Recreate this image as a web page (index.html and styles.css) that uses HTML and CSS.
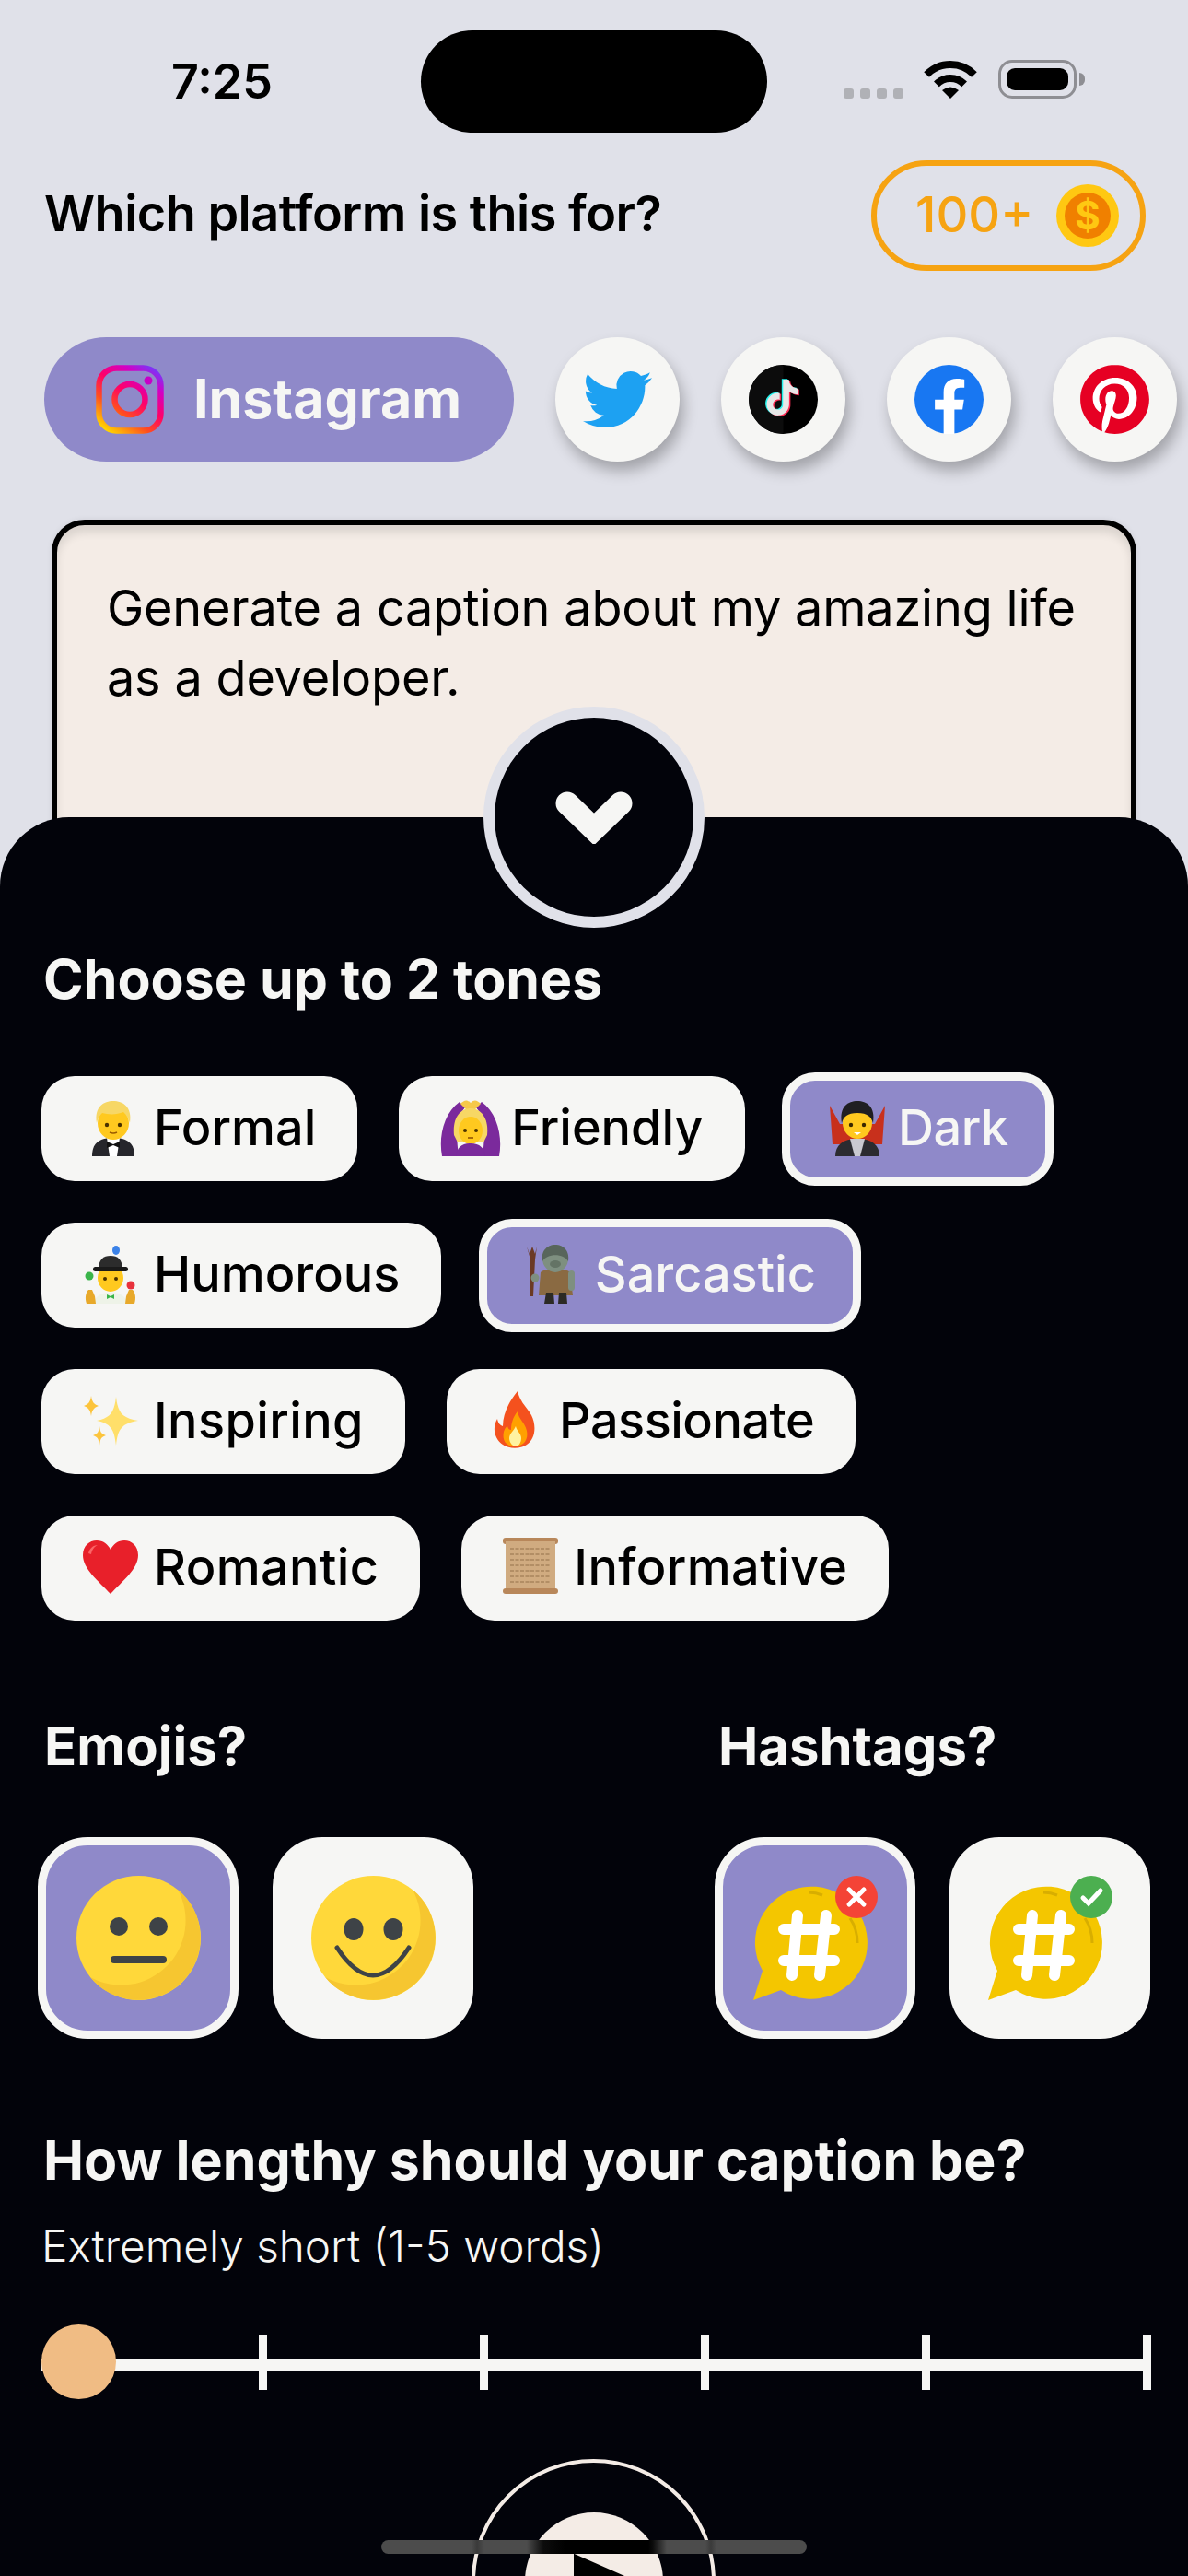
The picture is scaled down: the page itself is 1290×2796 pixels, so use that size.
FILE: index.html
```html
<!DOCTYPE html>
<html lang="en">
<head>
    <meta charset="UTF-8">
    <meta name="viewport" content="width=device-width, initial-scale=1.0">
    <title>Caption Generator</title>
    <link rel="stylesheet" href="styles.css">
</head>
<body>
    <svg class="defs" aria-hidden="true">
        <defs>
            <linearGradient id="ig-grad" gradientUnits="userSpaceOnUse" x1="12" y1="72" x2="62" y2="2">
                <stop offset="0" stop-color="#ffd600"/>
                <stop offset="0.3" stop-color="#ff4d1f"/>
                <stop offset="0.55" stop-color="#ff0069"/>
                <stop offset="0.8" stop-color="#d300c5"/>
                <stop offset="1" stop-color="#7638fa"/>
            </linearGradient>

            <symbol id="e-tux" viewBox="0 0 66 66">
                <path d="M10 63c0-13 6-20 23-20s23 7 23 20z" fill="#26262b"/>
                <path d="M26 43h14l-3 20h-8z" fill="#fff"/>
                <path d="M26 47l7 3 7-3v7l-7-3-7 3z" fill="#111"/>
                <ellipse cx="33" cy="27" rx="17" ry="18" fill="#ffc91f"/>
                <path d="M15 27C12 9 23 3 33 3s21 6 18 24c-2-7-5-10-7-12-7 3-16 3-23 1-3 3-5 6-6 11z" fill="#f7d765"/>
                <circle cx="26" cy="29" r="2.2" fill="#4a3200"/>
                <circle cx="40" cy="29" r="2.2" fill="#4a3200"/>
                <path d="M29 37q4 2 8 0" stroke="#9a5a00" stroke-width="1.5" fill="none"/>
            </symbol>
            <symbol id="e-woman" viewBox="0 0 66 66">
                <path d="M2 63C-2 42 4 16 21 4l6 6C17 22 17 38 20 63zM64 63C68 42 62 16 45 4l-6 6c10 12 10 28 7 53z" fill="#7b2a9c"/>
                <path d="M22 6c4-4 7-5 11-1 4-4 7-3 11 1l-6 6h-10z" fill="#f6c94a"/>
                <path d="M15 40C13 20 23 11 33 11s20 9 18 29l-4 8H19z" fill="#f7d765"/>
                <ellipse cx="33" cy="35" rx="13" ry="15" fill="#ffc91f"/>
                <path d="M17 63c1-9 6-14 16-14s15 5 16 14z" fill="#7b2a9c"/>
                <circle cx="27" cy="35" r="2" fill="#4a3200"/>
                <circle cx="39" cy="35" r="2" fill="#4a3200"/>
                <path d="M30 43h6" stroke="#8a4a00" stroke-width="1.5"/>
            </symbol>
            <symbol id="e-vampire" viewBox="0 0 66 66">
                <path d="M3 8l11 20h38L63 8l-3 42H6z" fill="#c8301c"/>
                <path d="M9 63c0-12 8-19 24-19s24 7 24 19z" fill="#2b2b30"/>
                <path d="M25 44h16l-5 19h-6z" fill="#c9c9d0"/>
                <ellipse cx="33" cy="27" rx="16" ry="17" fill="#ffc91f"/>
                <path d="M16 27C13 9 23 3 33 3s20 6 17 24c-2-7-6-11-17-11S18 20 16 27z" fill="#1f1f22"/>
                <circle cx="26" cy="29" r="2.2" fill="#3a2800"/>
                <circle cx="40" cy="29" r="2.2" fill="#3a2800"/>
                <path d="M29 37h8l-4 3z" fill="#fff"/>
            </symbol>
            <symbol id="e-juggler" viewBox="0 0 66 66">
                <ellipse cx="36" cy="6" rx="4" ry="5" fill="#3b82e8"/>
                <circle cx="7" cy="34" r="4.5" fill="#3ab54a"/>
                <circle cx="52" cy="44" r="4.5" fill="#e8323c"/>
                <path d="M12 64c1-8 7-12 18-12s17 4 18 12z" fill="#eef3e8"/>
                <path d="M26 54l4 2 4-2v5l-4-2-4 2z" fill="#3ab54a"/>
                <path d="M4 64c-2-6-1-12 2-15h4l3 7 1 8zM56 64c2-6 1-12-2-15h-4l-3 7-1 8z" fill="#e8a92a"/>
                <ellipse cx="30" cy="36" rx="14" ry="15" fill="#ffc91f"/>
                <circle cx="24" cy="37" r="2" fill="#4a3200"/>
                <circle cx="36" cy="37" r="2" fill="#4a3200"/>
                <path d="M17 27c0-11 5-15 13-15s13 4 13 15z" fill="#2c2c2c"/>
                <rect x="11" y="24" width="38" height="5" rx="2.5" fill="#1a1a1a"/>
            </symbol>
            <symbol id="e-troll" viewBox="0 0 66 66">
                <path d="M3 2l3 8 3-8 3 8 2-8-2 14-2 40H6l1-40z" fill="#6b3a24"/>
                <path d="M18 30c5-5 27-5 32 0l3 25H16z" fill="#8a6a42"/>
                <path d="M24 52h8l1 12h-11zM38 52h8l1 12H37z" fill="#2c2a24"/>
                <ellipse cx="34" cy="15" rx="14" ry="15" fill="#7e8f80"/>
                <path d="M20 18C18 5 27 0 34 0s16 5 14 18c-5-9-23-9-28 0z" fill="#58655b"/>
                <ellipse cx="34" cy="21" rx="6" ry="4" fill="#647365"/>
                <rect x="48" y="28" width="7" height="22" rx="3.5" fill="#7e8f80"/>
                <circle cx="12" cy="36" r="4.5" fill="#7e8f80"/>
            </symbol>
            <symbol id="e-sparkles" viewBox="0 0 66 66">
                <path d="M36 6c2 17 6 23 24 26-18 3-22 9-24 27-2-18-6-24-21-27 15-3 19-9 21-26z" fill="#ffdf6a"/>
                <path d="M9 5c1 7 3 9 8 11-5 2-7 4-8 11-1-7-3-9-8-11 5-2 7-4 8-11z" fill="#fcc43c"/>
                <path d="M18 38c1 7 2 8 7 10-5 2-6 3-7 11-1-8-2-9-7-11 5-2 6-3 7-10z" fill="#fcc43c"/>
            </symbol>
            <symbol id="e-fire" viewBox="0 0 66 66">
                <path d="M32 0c3 12 9 16 15 26 6 12 4 26-5 32-7 5-19 5-26 0C7 52 4 40 10 30c1 5 3 7 6 8C16 24 23 11 32 0z" fill="#f4511e"/>
                <path d="M32 22c1 8 8 12 10 21 2 9-3 17-13 17S15 53 17 44c1-3 2-5 4-6 1 3 2 4 4 4 0-7 2-14 7-20z" fill="#ffa000"/>
                <path d="M30 38c1 5 6 8 6 13 0 5-3 9-6 9s-7-4-7-9c0-5 5-8 7-13z" fill="#fff3a0"/>
            </symbol>
            <symbol id="e-heart" viewBox="0 0 66 66">
                <path d="M30 61C17 47 0 34 0 19 0 9 7 3 15 3c7 0 12 4 15 10 3-6 8-10 15-10 8 0 15 6 15 16 0 15-17 28-30 42z" fill="#e8202a"/>
                <path d="M6 17c1-5 5-9 10-9-4 2-6 5-7 10z" fill="#f77" opacity="0.8"/>
            </symbol>
            <symbol id="e-scroll" viewBox="0 0 66 66">
                <rect x="0" y="0" width="60" height="7" rx="3" fill="#b8875a"/>
                <rect x="3" y="4" width="54" height="54" fill="#d0ab80"/>
                <path d="M8 12h44M8 18h44M8 24h44M8 30h44M8 36h44M8 42h44M8 48h44" stroke="#a8855c" stroke-width="1.6" stroke-dasharray="4 1.5"/>
                <rect x="0" y="55" width="60" height="6" rx="3" fill="#b8875a"/>
            </symbol>
            <symbol id="hash" viewBox="0 0 135 135">
                <path d="M0 135l10-32A61 61 0 1 1 30 124z" fill="#f4c600"/>
                <path d="M60 18q8 0 15 3M105 46q8 12 8 27" stroke="#d8ae00" stroke-width="3" fill="none"/>
                <path d="M33 58h55M33 92h55M48 43l-6 65M79 43l-7 65" stroke="#fff" stroke-width="12" stroke-linecap="round" fill="none"/>
            </symbol>
        </defs>
    </svg>

    <div class="status-bar">
        <div class="time">7:25</div>
        <div class="island"></div>
        <div class="status-icons">
            <div class="signal"><span></span><span></span><span></span><span></span></div>
            <svg class="wifi" width="58" height="42" viewBox="0 0 58 42">
                <path d="M3.1 16A36 36 0 0 1 54.9 16M13.9 26.4A21 21 0 0 1 44.1 26.4" stroke="#000" stroke-width="8" fill="none"/>
                <path d="M29 42L20 33Q29 26 38 33Z"/>
            </svg>
            <div class="battery"><div class="battery-level"></div></div>
            <div class="battery-cap"></div>
        </div>
    </div>

    <div class="top-row">
        <h1 class="page-title">Which platform is this for?</h1>
        <div class="coins">
            <span>100+</span>
            <svg width="68" height="68" viewBox="0 0 68 68">
                <circle cx="34" cy="34" r="34" fill="#ffc812"/>
                <circle cx="34" cy="34" r="25" fill="#f08000"/>
                <text x="34" y="49" text-anchor="middle" class="coin-sign">$</text>
            </svg>
        </div>
    </div>

    <div class="platforms">
        <div class="platform-pill">
            <svg width="74" height="75" viewBox="0 0 74 75">
                <rect x="3.5" y="3.5" width="67" height="68" rx="19" fill="none" stroke="url(#ig-grad)" stroke-width="6.5"/>
                <circle cx="37" cy="37.5" r="16.5" fill="none" stroke="url(#ig-grad)" stroke-width="6.5"/>
                <circle cx="57" cy="17" r="4.5" fill="#c800c8"/>
            </svg>
            <span>Instagram</span>
        </div>
        <div class="platform-btn">
            <svg width="75" height="75" viewBox="0 0 24 24">
                <path fill="#1da1f2" d="M23.953 4.57a10 10 0 01-2.825.775 4.958 4.958 0 002.163-2.723c-.951.555-2.005.959-3.127 1.184a4.92 4.92 0 00-8.384 4.482C7.69 8.095 4.067 6.13 1.64 3.162a4.822 4.822 0 00-.666 2.475c0 1.71.87 3.213 2.188 4.096a4.904 4.904 0 01-2.228-.616v.06a4.923 4.923 0 003.946 4.827 4.996 4.996 0 01-2.212.085 4.936 4.936 0 004.604 3.417 9.867 9.867 0 01-6.102 2.105c-.39 0-.779-.023-1.17-.067a13.995 13.995 0 007.557 2.209c9.053 0 13.998-7.496 13.998-13.985 0-.21 0-.42-.015-.63A9.935 9.935 0 0024 4.59z"/>
            </svg>
        </div>
        <div class="platform-btn">
            <svg width="75" height="75" viewBox="0 0 75 75">
                <circle cx="37.5" cy="37.5" r="37.5" fill="#000"/>
                <path d="M37.5 0a37.5 37.5 0 0 0 0 75z" fill="#0c0c0c"/>
                <g transform="translate(17 16) scale(1.62)">
                    <path fill="#25f4ee" transform="translate(-0.9 -0.5)" d="M12.525.02c1.31-.02 2.61-.01 3.91-.02.08 1.53.63 3.09 1.75 4.17 1.12 1.11 2.7 1.62 4.24 1.79v4.03c-1.44-.05-2.89-.35-4.2-.97-.57-.26-1.1-.59-1.62-.93-.01 2.92.01 5.84-.02 8.75-.08 1.4-.54 2.79-1.35 3.94-1.31 1.92-3.58 3.17-5.91 3.21-1.43.08-2.86-.31-4.08-1.03-2.02-1.19-3.44-3.37-3.65-5.71-.02-.5-.03-1-.01-1.49.18-1.9 1.12-3.72 2.58-4.96 1.66-1.44 3.98-2.13 6.15-1.72.02 1.48-.04 2.96-.04 4.44-.99-.32-2.15-.23-3.02.37-.63.41-1.11 1.04-1.36 1.75-.21.51-.15 1.07-.14 1.61.24 1.64 1.82 3.02 3.5 2.87 1.12-.01 2.19-.66 2.77-1.61.19-.33.4-.67.41-1.06.1-1.79.06-3.57.07-5.36.01-4.03-.01-8.05.02-12.07z"/>
                    <path fill="#fe2c55" transform="translate(0.9 0.6)" d="M12.525.02c1.31-.02 2.61-.01 3.91-.02.08 1.53.63 3.09 1.75 4.17 1.12 1.11 2.7 1.62 4.24 1.79v4.03c-1.44-.05-2.89-.35-4.2-.97-.57-.26-1.1-.59-1.62-.93-.01 2.92.01 5.84-.02 8.75-.08 1.4-.54 2.79-1.35 3.94-1.31 1.92-3.58 3.17-5.91 3.21-1.43.08-2.86-.31-4.08-1.03-2.02-1.19-3.44-3.37-3.65-5.71-.02-.5-.03-1-.01-1.49.18-1.9 1.12-3.72 2.58-4.96 1.66-1.44 3.98-2.13 6.15-1.72.02 1.48-.04 2.96-.04 4.44-.99-.32-2.15-.23-3.02.37-.63.41-1.11 1.04-1.36 1.75-.21.51-.15 1.07-.14 1.61.24 1.64 1.82 3.02 3.5 2.87 1.12-.01 2.19-.66 2.77-1.61.19-.33.4-.67.41-1.06.1-1.79.06-3.57.07-5.36.01-4.03-.01-8.05.02-12.07z"/>
                    <path fill="#e8e8e8" d="M12.525.02c1.31-.02 2.61-.01 3.91-.02.08 1.53.63 3.09 1.75 4.17 1.12 1.11 2.7 1.62 4.24 1.79v4.03c-1.44-.05-2.89-.35-4.2-.97-.57-.26-1.1-.59-1.62-.93-.01 2.92.01 5.84-.02 8.75-.08 1.4-.54 2.79-1.35 3.94-1.31 1.92-3.58 3.17-5.91 3.21-1.43.08-2.86-.31-4.08-1.03-2.02-1.19-3.44-3.37-3.65-5.71-.02-.5-.03-1-.01-1.49.18-1.9 1.12-3.72 2.58-4.96 1.66-1.44 3.98-2.13 6.15-1.72.02 1.48-.04 2.96-.04 4.44-.99-.32-2.15-.23-3.02.37-.63.41-1.11 1.04-1.36 1.75-.21.51-.15 1.07-.14 1.61.24 1.64 1.82 3.02 3.5 2.87 1.12-.01 2.19-.66 2.77-1.61.19-.33.4-.67.41-1.06.1-1.79.06-3.57.07-5.36.01-4.03-.01-8.05.02-12.07z"/>
                </g>
            </svg>
        </div>
        <div class="platform-btn">
            <svg width="75" height="75" viewBox="0 0 24 24">
                <circle cx="12" cy="12" r="12" fill="#1877f2"/>
                <path fill="#fff" d="M16.67 15.54l.53-3.47h-3.33V9.82c0-.95.47-1.87 1.96-1.87h1.51V5s-1.37-.24-2.69-.24c-2.74 0-4.53 1.66-4.53 4.67v2.64H7.08v3.47h3.05V24h3.75v-8.46z"/>
            </svg>
        </div>
        <div class="platform-btn">
            <svg width="75" height="75" viewBox="0 0 24 24">
                <circle cx="12" cy="12" r="11.5" fill="#fff"/>
                <path fill="#e60023" d="M12.017 0C5.396 0 .029 5.367.029 11.987c0 5.079 3.158 9.417 7.618 11.162-.105-.949-.199-2.403.041-3.439.219-.937 1.406-5.957 1.406-5.957s-.359-.72-.359-1.781c0-1.663.967-2.911 2.168-2.911 1.024 0 1.518.769 1.518 1.688 0 1.029-.653 2.567-.992 3.992-.285 1.193.6 2.165 1.775 2.165 2.128 0 3.768-2.245 3.768-5.487 0-2.861-2.063-4.869-5.008-4.869-3.41 0-5.409 2.562-5.409 5.199 0 1.033.394 2.143.889 2.741.099.12.112.225.085.345-.09.375-.293 1.199-.334 1.363-.053.225-.172.271-.401.165-1.495-.69-2.433-2.878-2.433-4.646 0-3.776 2.748-7.252 7.92-7.252 4.158 0 7.392 2.967 7.392 6.923 0 4.135-2.607 7.462-6.233 7.462-1.214 0-2.354-.629-2.758-1.379l-.749 2.848c-.269 1.045-1.004 2.352-1.498 3.146 1.123.345 2.306.535 3.55.535 6.607 0 11.985-5.365 11.985-11.987C23.97 5.39 18.592.026 11.985.026L12.017 0z"/>
            </svg>
        </div>
    </div>

    <div class="prompt-card">Generate a caption about my amazing life as a developer.</div>

    <div class="sheet">
        <div class="collapse-btn">
            <svg width="84" height="57" viewBox="0 0 84 57">
                <polyline points="13,13 42,41 71,13" fill="none" stroke="#f6f6f4" stroke-width="25" stroke-linecap="round"/>
            </svg>
        </div>

        <h2 class="section-title">Choose up to 2 tones</h2>
        <div class="tones">
            <div class="tone"><svg class="emoji"><use href="#e-tux"/></svg>Formal</div>
            <div class="tone"><svg class="emoji"><use href="#e-woman"/></svg>Friendly</div>
            <div class="tone selected tight"><svg class="emoji"><use href="#e-vampire"/></svg>Dark</div>
            <div class="tone"><svg class="emoji"><use href="#e-juggler"/></svg>Humorous</div>
            <div class="tone selected"><svg class="emoji"><use href="#e-troll"/></svg>Sarcastic</div>
            <div class="tone loose"><svg class="emoji"><use href="#e-sparkles"/></svg>Inspiring</div>
            <div class="tone tight"><svg class="emoji"><use href="#e-fire"/></svg>Passionate</div>
            <div class="tone loose"><svg class="emoji"><use href="#e-heart"/></svg>Romantic</div>
            <div class="tone loose"><svg class="emoji"><use href="#e-scroll"/></svg>Informative</div>
        </div>

        <div class="options">
            <div class="option-group emojis">
                <h2 class="section-title">Emojis?</h2>
                <div class="tiles">
                    <div class="tile selected">
                        <svg width="135" height="135" viewBox="0 0 135 135">
                            <circle cx="67.5" cy="67.5" r="67.5" fill="#ffd83a"/>
                            <path d="M110 15A67.5 67.5 0 1 1 15 110A70 70 0 0 0 110 15Z" fill="#f6c630"/>
                            <circle cx="46" cy="55" r="10" fill="#3e4347"/>
                            <circle cx="89" cy="55" r="10" fill="#3e4347"/>
                            <rect x="37" y="87" width="61" height="8" rx="4" fill="#3e4347"/>
                        </svg>
                    </div>
                    <div class="tile">
                        <svg width="135" height="135" viewBox="0 0 135 135">
                            <circle cx="67.5" cy="67.5" r="67.5" fill="#ffd83a"/>
                            <path d="M110 15A67.5 67.5 0 1 1 15 110A70 70 0 0 0 110 15Z" fill="#f6c630"/>
                            <ellipse cx="46" cy="58" rx="10.5" ry="12" fill="#3e4347"/>
                            <ellipse cx="89" cy="58" rx="10.5" ry="12" fill="#3e4347"/>
                            <path d="M28 78Q67 138 106 78" fill="none" stroke="#3e4347" stroke-width="5" stroke-linecap="round"/>
                        </svg>
                    </div>
                </div>
            </div>
            <div class="option-group hashtags">
                <h2 class="section-title">Hashtags?</h2>
                <div class="tiles">
                    <div class="tile selected">
                        <svg width="135" height="135" viewBox="0 0 135 135">
                            <use href="#hash"/>
                            <circle cx="112" cy="23" r="23" fill="#f44336"/>
                            <path d="M104 15l16 16M120 15l-16 16" stroke="#fff" stroke-width="5" stroke-linecap="round"/>
                        </svg>
                    </div>
                    <div class="tile">
                        <svg width="135" height="135" viewBox="0 0 135 135">
                            <use href="#hash"/>
                            <circle cx="112" cy="23" r="23" fill="#4caf50"/>
                            <path d="M103 24l6 6 13-14" fill="none" stroke="#fff" stroke-width="5" stroke-linecap="round"/>
                        </svg>
                    </div>
                </div>
            </div>
        </div>

        <h2 class="section-title">How lengthy should your caption be?</h2>
        <p class="length-label">Extremely short (1-5 words)</p>
        <div class="slider">
            <div class="thumb"></div>
            <span></span><span></span><span></span><span></span><span></span>
        </div>

        <div class="play-btn">
            <div class="play-inner"></div>
        </div>
    </div>

    <div class="home-bar"></div>
</body>
</html>
```

FILE: styles.css
```css
* {
    box-sizing: border-box;
}

body {
    margin: 0;
    width: 1290px;
    height: 2796px;
    overflow: hidden;
    position: relative;
    background: #e0e1e9;
    color: #000;
    font-family: Inter, "Noto Sans", sans-serif;
}

h1,
h2,
p {
    margin: 0;
}

.defs {
    position: absolute;
    width: 0;
    height: 0;
}

/* Status bar */
.status-bar {
    height: 174px;
    padding-top: 33px;
    display: flex;
}

.time {
    width: 457px;
    padding: 26px 0 0 186px;
    font-size: 52px;
    font-weight: 600;
    line-height: 60px;
}

.island {
    width: 376px;
    height: 111px;
    border-radius: 56px;
    background: #000;
}

.status-icons {
    display: flex;
    align-items: flex-end;
    height: 74px;
    margin-left: 83px;
}

.signal {
    display: flex;
    gap: 7px;
    margin-right: 22px;
}

.signal span {
    width: 11px;
    height: 11px;
    border-radius: 3px;
    background: #b0b1b6;
}

.battery {
    width: 85px;
    height: 42px;
    margin-left: 23px;
    padding: 6px;
    border: 3px solid #8e8e93;
    border-radius: 15px;
}

.battery-level {
    width: 100%;
    height: 100%;
    border-radius: 9px;
    background: #000;
}

.battery-cap {
    width: 6px;
    height: 14px;
    margin: 0 0 14px 3px;
    border-radius: 0 7px 7px 0;
    background: #8e8e93;
}

/* Title row */
.top-row {
    height: 120px;
    padding: 0 46px 0 48px;
    display: flex;
    align-items: center;
    justify-content: space-between;
}

.page-title {
    padding-bottom: 5px;
    font-size: 54px;
    font-weight: 600;
    letter-spacing: -0.5px;
}

.coins {
    width: 298px;
    height: 120px;
    padding: 0 23px 0 42px;
    border: 6px solid #f6a312;
    border-radius: 60px;
    display: flex;
    align-items: center;
    justify-content: space-between;
    color: #f6a312;
    font-size: 54px;
    font-weight: 500;
}

.coins span {
    padding-bottom: 4px;
}

.coin-sign {
    fill: #ffc812;
    font-size: 42px;
    font-weight: 700;
}

/* Platform picker */
.platforms {
    margin-top: 72px;
    padding-left: 48px;
    display: flex;
    gap: 45px;
}

.platform-pill {
    width: 510px;
    height: 135px;
    padding-left: 56px;
    border-radius: 68px;
    background: #8f89c9;
    color: #f6f6f4;
    display: flex;
    align-items: center;
    gap: 32px;
    font-size: 59px;
    font-weight: 700;
}

.platform-pill span {
    padding-bottom: 3px;
}

.platform-btn {
    width: 135px;
    height: 135px;
    border-radius: 50%;
    background: #f6f6f4;
    box-shadow: 4px 10px 16px rgba(0, 0, 0, 0.28);
    display: flex;
    align-items: center;
    justify-content: center;
}

/* Prompt box */
.prompt-card {
    height: 380px;
    margin: 63px 56px 0 56px;
    padding: 52px 50px 0 54px;
    border: 6px solid #000;
    border-radius: 36px;
    background: #f4ece6;
    box-shadow: inset 0 8px 10px rgba(0, 0, 0, 0.1), 0 0 6px rgba(0, 0, 0, 0.08);
    font-size: 54px;
    letter-spacing: -0.2px;
    line-height: 76px;
}

/* Bottom sheet */
.sheet {
    position: relative;
    height: 1909px;
    margin-top: -57px;
    padding: 141px 41px 0 41px;
    border-radius: 75px 75px 0 0;
    background: #02030a;
    color: #f6f6f4;
}

.collapse-btn {
    position: absolute;
    top: -120px;
    left: 525px;
    width: 240px;
    height: 240px;
    border: 12px solid #e0e1e9;
    border-radius: 50%;
    background: #02030a;
    display: flex;
    align-items: center;
    justify-content: center;
}

.section-title {
    height: 70px;
    margin-left: 6px;
    font-size: 59px;
    font-weight: 700;
    line-height: 70px;
}

.tones {
    margin: 70px 0 0 4px;
    display: flex;
    flex-wrap: wrap;
    gap: 45px;
}

.tone {
    height: 114px;
    padding: 0 45px 3px 45px;
    border-radius: 36px;
    background: #f6f6f4;
    color: #000;
    display: flex;
    align-items: center;
    gap: 11px;
    font-size: 54px;
    font-weight: 500;
}

.tone.loose {
    letter-spacing: 0.4px;
}

.tone.tight {
    letter-spacing: -0.5px;
}

.tone.selected {
    height: 123px;
    margin: -4.5px;
    padding: 0 40px 3px 40px;
    border: 9px solid #f6f6f4;
    background: #8f89c9;
    color: #f6f6f4;
}

.emoji {
    width: 66px;
    height: 66px;
    flex-shrink: 0;
    margin-top: 3px;
}

.options {
    margin-top: 101px;
    display: flex;
}

.emojis {
    width: 735px;
}

.option-group .section-title {
    margin-left: 7px;
    font-size: 58px;
}

.hashtags .section-title {
    margin-left: 4px;
}

.tiles {
    margin-top: 64px;
    display: flex;
    gap: 37px;
}

.tile {
    width: 218px;
    height: 219px;
    border-radius: 54px;
    background: #f6f6f4;
    display: flex;
    align-items: center;
    justify-content: center;
}

.tile.selected {
    border: 9px solid #f6f6f4;
    background: #8f89c9;
}

.options + .section-title {
    margin-top: 97px;
}

.length-label {
    margin: 28px 0 0 4px;
    font-size: 47.7px;
    font-weight: 300;
    line-height: 60px;
}

.slider {
    position: relative;
    width: 1205px;
    height: 81px;
    margin: 55px 0 0 4px;
    display: flex;
    justify-content: flex-end;
    align-items: center;
    gap: 231px;
    background: linear-gradient(#f6f6f4, #f6f6f4) 0 38px / 1196px 12px no-repeat;
}

.slider span {
    width: 9px;
    height: 60px;
    background: #f6f6f4;
}

.thumb {
    position: absolute;
    top: 0;
    left: 0;
    width: 81px;
    height: 81px;
    border-radius: 50%;
    background: #f0bc84;
}

.play-btn {
    width: 265px;
    height: 265px;
    margin: 65px 0 0 471px;
    border: 4px solid #f4ece6;
    border-radius: 50%;
    display: flex;
    align-items: center;
    justify-content: center;
}

.play-inner {
    position: relative;
    width: 150px;
    height: 150px;
    border-radius: 50%;
    background: #f4ece6;
}

.play-inner::after {
    content: '';
    position: absolute;
    top: 45px;
    left: 53px;
    width: 70px;
    height: 70px;
    background: #000;
    clip-path: polygon(0 0, 100% 44%, 0 88%);
}

/* Home indicator over the sheet */
.home-bar {
    position: absolute;
    top: 2757px;
    left: 414px;
    width: 462px;
    height: 15px;
    border-radius: 8px;
    background: linear-gradient(90deg,
        #4c4c4c 0,
        #4c4c4c 98px,
        #3a3a3a 104px,
        #4c4c4c 112px,
        #4c4c4c 158px,
        #0c0c0c 176px,
        #000 200px,
        #000 290px,
        #0c0c0c 295px,
        #4c4c4c 310px,
        #4c4c4c 352px,
        #3a3a3a 358px,
        #4c4c4c 364px);
}
```
